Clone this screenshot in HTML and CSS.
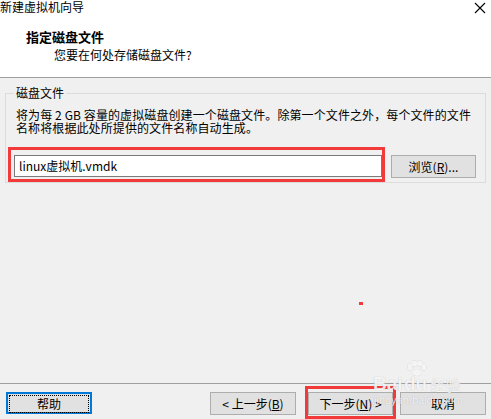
FILE: index.html
```html
<!DOCTYPE html>
<html lang="zh-CN">
<head>
<meta charset="utf-8">
<title>新建虚拟机向导</title>
<link rel="stylesheet" href="styles.css">
</head>
<body>
<div class="window">
  <header class="header">
    <div class="titlebar">
      <span class="caption">新建虚拟机向导</span>
      <svg class="close" width="12" height="12" viewBox="0 0 12 12" aria-label="关闭"><path d="M1 1L11 11M11 1L1 11" stroke="#000000" stroke-width="1.1" fill="none"/></svg>
    </div>
    <div class="title">指定磁盘文件</div>
    <div class="subtitle">您要在何处存储磁盘文件?</div>
  </header>

  <main class="main">
    <section class="group">
      <div class="group-label">磁盘文件</div>
      <p class="desc">将为每 2 GB 容量的虚拟磁盘创建一个磁盘文件。除第一个文件之外，每个文件的文件名称将根据此处所提供的文件名称自动生成。</p>
      <div class="file-row">
        <div class="mark mark-input">
          <div class="input">linux虚拟机.vmdk</div>
        </div>
        <button class="btn browse">浏览(<u>R</u>)...</button>
      </div>
    </section>
    <span class="dot"></span>
  </main>

  <footer class="footer">
    <button class="btn help"><span class="focus">帮助</span></button>
    <div class="nav">
      <button class="btn">&lt; 上一步(<u>B</u>)</button>
      <div class="mark mark-next">
        <button class="btn">下一步(<u>N</u>) &gt;</button>
      </div>
      <button class="btn">取消</button>
    </div>
  </footer>

  <div class="watermark">
    <div class="wm-top">
      <span class="wm-bai">Bai</span>
      <span class="wm-du">
        <svg class="paw" width="24" height="16" viewBox="0 0 24 16">
          <ellipse cx="6" cy="7" rx="2.6" ry="3.4" />
          <ellipse cx="10.5" cy="3.5" rx="2.6" ry="3.2" />
          <ellipse cx="15.5" cy="3.5" rx="2.6" ry="3.2" />
          <ellipse cx="20" cy="7" rx="2.6" ry="3.4" />
          <ellipse cx="13" cy="12.5" rx="5" ry="3.5" />
        </svg>
        du</span>
      <span class="wm-jy">经验</span>
    </div>
    <div class="wm-url">jingyan.baidu.com</div>
  </div>
</div>
</body>
</html>
```

FILE: styles.css
```css
html, body {
  margin: 0;
  padding: 0;
}

body {
  font-family: "Noto Sans CJK SC", "Noto Sans", sans-serif;
  font-size: 12px;
  line-height: 14px;
  color: #000;
  background: #f0f0f0;
}

.window {
  position: relative;
  width: 491px;
  height: 419px;
  overflow: hidden;
  display: flex;
  flex-direction: column;
  background: #f0f0f0;
}

/* header */
.header {
  background: #fff;
  border-bottom: 1px solid #a0a0a0;
  box-sizing: border-box;
  height: 78px;
  flex: none;
  display: flex;
  flex-direction: column;
}

.titlebar {
  display: flex;
  justify-content: space-between;
  align-items: flex-start;
  padding: 0 5px 0 0;
  height: 26px;
}

.caption {
  display: block;
  line-height: 14px;
}

.close {
  display: block;
  flex: none;
  width: 12px;
  height: 12px;
  margin-top: 2px;
}

.title {
  font-weight: bold;
  font-size: 13px;
  line-height: 16px;
  margin-left: 26px;
  margin-top: 3px;
}

.subtitle {
  line-height: 14px;
  margin-left: 54px;
  margin-top: 3px;
}

/* main */
.main {
  flex: 1;
  position: relative;
  padding: 15px 5px 0 5px;
}

.group {
  border: 1px solid #dcdcdc;
  padding: 0 8px 0 2px;
  height: 90px;
  box-sizing: border-box;
}

.group-label {
  width: max-content;
  background: #f0f0f0;
  line-height: 14px;
  margin: -8px 0 0 6px;
  padding: 0 2px;
}

.desc {
  margin: 8px 0 0 8px;
  line-height: 13px;
  letter-spacing: 0.1px;
}

.file-row {
  display: flex;
  align-items: flex-start;
  margin-top: 13px;
}

.mark {
  border: 3px solid #f23a3a;
}

.mark-input {
  width: 377px;
  height: 35px;
  padding: 5px 0 0 3px;
  box-sizing: border-box;
  flex: none;
}

.input {
  width: 368px;
  height: 22px;
  box-sizing: border-box;
  border: 1px solid #7a7a7a;
  background: #fff;
  line-height: 20px;
  padding-left: 4px;
}

.btn {
  font-family: inherit;
  font-size: 12px;
  color: #000;
  background: #e1e1e1;
  border: 1px solid #adadad;
  width: 86px;
  height: 23px;
  padding: 0;
  line-height: 20px;
  text-align: center;
  flex: none;
}

.btn u {
  text-underline-offset: 1px;
}

.browse {
  margin-left: 6px;
  margin-top: 8px;
  width: 85px;
}

.dot {
  position: absolute;
  left: 359px;
  top: 224px;
  width: 4px;
  height: 3px;
  background: #f23a3a;
}

/* footer */
.footer {
  height: 36px;
  flex: none;
  border-top: 1px solid #a0a0a0;
  display: flex;
  align-items: flex-start;
  justify-content: space-between;
  padding: 8px 5px 0 6px;
  box-sizing: border-box;
}

.help {
  border: 2px solid #0078d7;
  padding: 0;
  width: 86px;
  height: 22px;
}

.focus {
  display: block;
  height: 16px;
  margin: 1px;
  border: 1px dotted #000;
  line-height: 16px;
}

.nav {
  display: flex;
  align-items: flex-start;
}

.mark-next {
  margin: -6px 4px 0 9px;
  padding: 3px 0 1px 0;
}

.mark-next .btn {
  width: 85px;
}

/* watermark */
.watermark {
  position: absolute;
  left: 373px;
  top: 360px;
  color: rgba(255, 255, 255, 0.85);
  text-shadow: 0 0 1px rgba(0, 0, 0, 0.25);
  pointer-events: none;
}

.wm-top {
  display: flex;
  align-items: flex-end;
  height: 33px;
}

.wm-bai,
.wm-du {
  font-family: "Liberation Sans", sans-serif;
  font-weight: bold;
  font-size: 19px;
  line-height: 18px;
}

.wm-du {
  display: inline-flex;
  flex-direction: column;
  align-items: center;
  margin-left: 1px;
}

.paw {
  fill: rgba(255, 255, 255, 0.85);
  filter: drop-shadow(0 0 0.6px rgba(0, 0, 0, 0.3));
  margin-bottom: -1px;
}

.wm-jy {
  font-size: 15px;
  line-height: 17px;
  margin-left: 3px;
}

.wm-url {
  font-family: "Liberation Sans", sans-serif;
  font-size: 11px;
  line-height: 12px;
  margin-top: 1px;
  margin-left: 1px;
}
```
